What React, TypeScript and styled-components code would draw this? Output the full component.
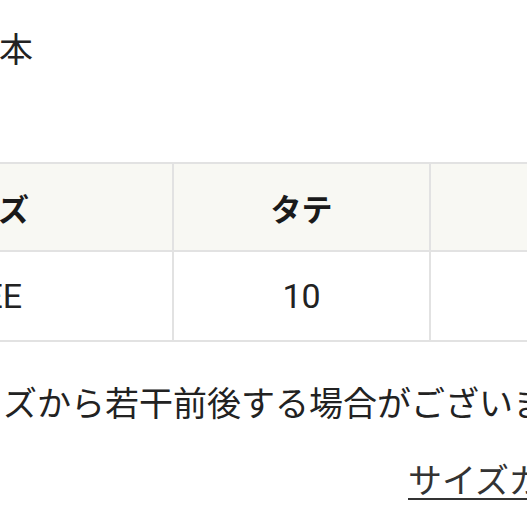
import styled, { createGlobalStyle } from "styled-components";

const GlobalStyle = createGlobalStyle`
  html, body {
    margin: 0;
    padding: 0;
    background: #ffffff;
    overflow: hidden;
  }
  body {
    font-family: "Noto Sans CJK JP", "Roboto", sans-serif;
    color: #222222;
  }
`;

const Page = styled.div`
  width: 527px;
  height: 527px;
  overflow: hidden;
  padding-top: 22px;
  box-sizing: border-box;
`;

const Line = styled.p<{ $shift: number }>`
  margin: 0 0 0 ${(p) => p.$shift}px;
  font-size: 34px;
  line-height: 51px;
  white-space: nowrap;
`;

const SizeTable = styled.table`
  width: 932px;
  min-width: 932px;
  margin: 89px 0 34px -208px;
  border-collapse: collapse;
  table-layout: fixed;
  font-family: "Roboto", "Noto Sans CJK JP", sans-serif;
`;

const HeadCell = styled.th<{ $w: number }>`
  width: ${(p) => p.$w}px;
  height: 86px;
  padding: 0;
  background: #f8f8f3;
  border: 2px solid #e2e2e2;
  font-family: "Noto Sans CJK JP", sans-serif;
  font-size: 31px;
  font-weight: 700;
  text-align: center;
  color: #1a1a1a;
`;

const Cell = styled.td`
  height: 88px;
  padding: 0;
  border: 2px solid #e2e2e2;
  font-size: 34px;
  text-align: center;
  color: #222222;
`;

const LinkRow = styled.div`
  padding-left: 408px;
  margin-top: 26px;
  white-space: nowrap;
`;

const GuideLink = styled.a`
  font-size: 34px;
  line-height: 51px;
  color: #333333;
  text-decoration: underline;
  text-decoration-thickness: 2px;
  text-underline-offset: 5px;
`;

export default function App() {
  return (
    <>
      <GlobalStyle />
      <Page>
        <Line $shift={-35}>日本</Line>
        <SizeTable>
          <thead>
            <tr>
              <HeadCell $w={378}>サイズ</HeadCell>
              <HeadCell $w={255}>タテ</HeadCell>
              <HeadCell $w={299}>ヨコ</HeadCell>
            </tr>
          </thead>
          <tbody>
            <tr>
              <Cell>FREE</Cell>
              <Cell>10</Cell>
              <Cell>20</Cell>
            </tr>
          </tbody>
        </SizeTable>
        <Line $shift={-64}>サイズから若干前後する場合がございます。</Line>
        <LinkRow>
          <GuideLink href="#">サイズガイド</GuideLink>
        </LinkRow>
      </Page>
    </>
  );
}
